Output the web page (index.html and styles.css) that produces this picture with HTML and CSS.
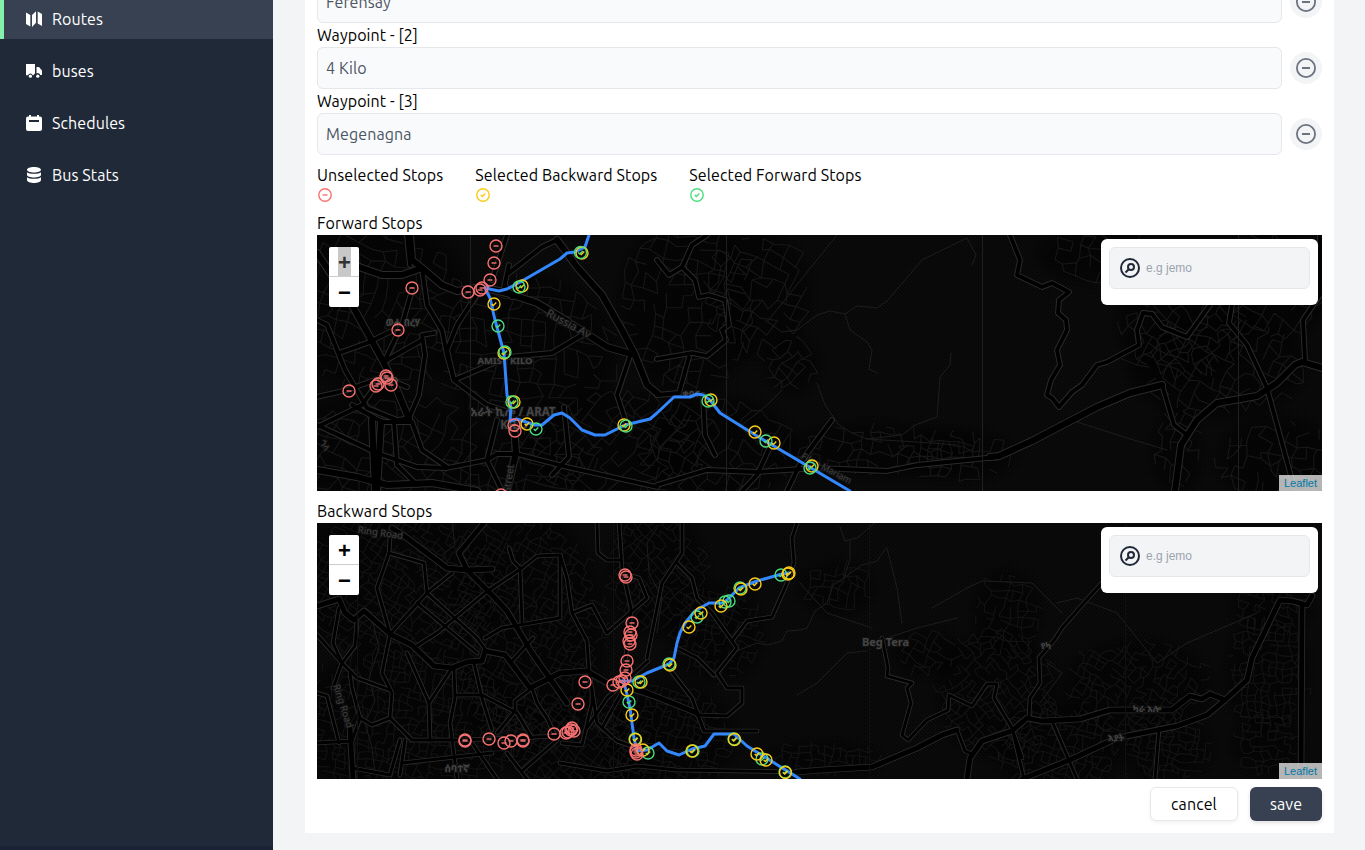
FILE: index.html
```html
<!DOCTYPE html>
<html lang="en">
<head>
<meta charset="utf-8">
<title>Routes</title>
<link rel="stylesheet" href="styles.css">
</head>
<body>
<svg class="defs" aria-hidden="true">
  <symbol id="i-minus" viewBox="0 0 24 24"><path fill="currentColor" d="M12 2a10 10 0 1 0 0 20 10 10 0 0 0 0-20zm0 18.200a8.200 8.200 0 1 1 0-16.400 8.200 8.200 0 0 1 0 16.400zM8 11h8v2H8z"/></symbol>
  <symbol id="i-find" viewBox="0 0 24 24"><g fill="none" stroke="currentColor" stroke-width="2"><circle cx="12" cy="12" r="9"/><circle cx="13" cy="11" r="3"/><path d="M10.800 13.200L7.500 16.500"/></g></symbol>
</svg>
<div class="app">
  <nav class="side">
    <a class="item active"><svg class="ic" viewBox="0 0 16 16"><path fill="currentColor" d="M0 1.500L4.300 4v11.500L0 13zM6 4l4-3.800v11.500L6 16zM11.700.5L16 3v12l-4.300-2.500z"/></svg><span>Routes</span></a>
    <a class="item"><svg class="ic" viewBox="0 0 16 16"><path fill="currentColor" d="M0 1h9v9.500a3 3 0 0 0-1.500 1.800h-.8a2.400 2.400 0 0 0-4.600 0H0zM10.500 4H13l3 3.500V12h-1.800a2.400 2.400 0 0 0-3.700-1.500z"/><circle cx="4.400" cy="13.200" r="1.600" fill="currentColor"/><circle cx="11.800" cy="13.200" r="1.600" fill="currentColor"/></svg><span>buses</span></a>
    <a class="item"><svg class="ic" viewBox="0 0 16 16"><path fill="currentColor" fill-rule="evenodd" d="M3 0h2v1.500h6V0h2v1.500h1A2 2 0 0 1 16 3.500V14a2 2 0 0 1-2 2H2a2 2 0 0 1-2-2V3.500a2 2 0 0 1 2-2h1zM3 5v2h10V5z"/></svg><span>Schedules</span></a>
    <a class="item"><svg class="ic" viewBox="0 0 16 16"><path fill="currentColor" d="M8 0c4 0 7 1.200 7 2.800S12 5.600 8 5.600 1 4.400 1 2.800 4 0 8 0zM1 5.200C3.500 7.300 12.500 7.300 15 5.200v2.600c0 3.600-14 3.600-14 0zM1 10.200c2.500 2.100 11.500 2.100 14 0V13c0 4-14 4-14 0z"/></svg><span>Bus Stats</span></a>
  </nav>
  <main class="page">
    <section class="card">
      <div class="row"><div class="field">Ferensay</div><button class="rm"><svg><use href="#i-minus"/></svg></button></div>
      <label class="lab">Waypoint - [2]</label>
      <div class="row"><div class="field">4 Kilo</div><button class="rm"><svg><use href="#i-minus"/></svg></button></div>
      <label class="lab">Waypoint - [3]</label>
      <div class="row"><div class="field">Megenagna</div><button class="rm"><svg><use href="#i-minus"/></svg></button></div>
      <div class="legend">
        <div class="key"><span>Unselected Stops</span><svg class="dot red" viewBox="-8 -8 16 16"><circle r="6.200"/><path d="M-2.500 0h5"/></svg></div>
        <div class="key"><span>Selected Backward Stops</span><svg class="dot yellow" viewBox="-8 -8 16 16"><circle r="6.200"/><path d="M-2.300 0l1.600 1.600L2.300-1.600"/></svg></div>
        <div class="key"><span>Selected Forward Stops</span><svg class="dot green" viewBox="-8 -8 16 16"><circle r="6.200"/><path d="M-2.300 0l1.600 1.600L2.300-1.600"/></svg></div>
      </div>
      <div class="lab">Forward Stops</div>
      <div class="map">
        <svg class="canvas" id="forward" viewBox="0 0 1005 256"></svg>
        <div class="zoom"><span class="plus"><b class="marked">+</b></span><span>−</span></div>
        <div class="search"><div class="box"><svg><use href="#i-find"/></svg><span>e.g jemo</span></div></div>
        <a class="credit">Leaflet</a>
      </div>
      <div class="lab second">Backward Stops</div>
      <div class="map">
        <svg class="canvas" id="backward" viewBox="0 0 1005 256"></svg>
        <div class="zoom"><span class="plus"><b>+</b></span><span>−</span></div>
        <div class="search"><div class="box"><svg><use href="#i-find"/></svg><span>e.g jemo</span></div></div>
        <a class="credit">Leaflet</a>
      </div>
      <div class="actions"><button class="btn cancel">cancel</button><button class="btn save">save</button></div>
    </section>
  </main>
</div>
<script src="map.js"></script>
</body>
</html>
```
FILE: styles.css
```css
* { box-sizing: border-box; }
body { margin: 0; height: 850px; overflow: hidden; background: #f3f4f6; font: 16px/24px "Ubuntu", "Noto Sans", sans-serif; letter-spacing: .1px; color: #000; }
.defs { position: absolute; width: 0; height: 0; }
.app { display: flex; height: 850px; }
.side { width: 273px; flex: none; background: #1f2937; border-bottom: 4px solid #1a2234; display: flex; flex-direction: column; gap: 12px; }
.item { display: flex; align-items: center; gap: 10px; height: 40px; padding-left: 26px; color: #fff; }
.item.active { height: 39px; background: #374151; border-left: 4px solid #86efac; padding-left: 22px; padding-bottom: 1px; }
.ic { width: 16px; height: 16px; flex: none; }
.page { flex: 1; padding: 0 31px 0 32px; }
.card { background: #fff; height: 833px; padding: 0 12px; overflow: hidden; }
.row { display: flex; align-items: center; gap: 8px; height: 42px; }
.row:first-child { margin-top: -19px; }
.field { flex: 1; height: 42px; border: 1px solid #e5e7eb; border-radius: 6px; background: #f9fafb; color: #4b5563; padding: 8px; }
.rm { width: 32px; height: 32px; border: 0; border-radius: 50%; background: #f3f4f6; padding: 4px; color: #6b7280; }
.rm svg { width: 24px; height: 24px; display: block; }
.lab { display: block; height: 24px; }
.legend { display: flex; gap: 32px; height: 48px; margin-top: 8px; }
.key { display: flex; flex-direction: column; }
.dot { width: 16px; height: 16px; }
.dot, .stop { fill: none; stroke-width: 1.400; }
.red { stroke: #f87171; }
.yellow { stroke: #facc15; }
.green { stroke: #4ade80; }
.map { position: relative; height: 256px; background: #080808; overflow: hidden; letter-spacing: 0; }
.canvas { display: block; width: 1005px; height: 256px; }
.second { margin-top: 8px; }
.zoom { position: absolute; left: 12px; top: 12px; width: 30px; height: 60px; background: #fff; border-radius: 2px; font: bold 22px/31px "Liberation Sans", sans-serif; text-align: center; }
.zoom span { display: block; height: 30px; padding-left: 1px; }
.zoom .plus { border-bottom: 1px solid #ccc; }
.zoom b { display: block; width: 13px; height: 29px; margin: 0 auto; }
.zoom .marked { background: #c8c8c8; color: #333; }
.search { position: absolute; right: 4px; top: 4px; width: 217px; height: 66px; padding: 8px; background: #fff; border-radius: 6px; }
.box { display: flex; align-items: center; gap: 4px; height: 42px; padding-left: 8px; border: 1px solid #e5e7eb; border-radius: 6px; background: #f3f4f6; color: #9ca3af; font: 12px/18px "Liberation Sans", sans-serif; }
.box svg { width: 24px; height: 24px; color: #1f2937; }
.credit { position: absolute; right: 0; bottom: 0; height: 16px; padding: 0 5px; background: rgba(255,255,255,.7); color: #0078a8; font: 11px/16px "Liberation Sans", sans-serif; }
.actions { display: flex; justify-content: flex-end; gap: 12px; padding-top: 8px; }
.btn { height: 34px; border-radius: 6px; font: inherit; letter-spacing: inherit; padding: 0; box-shadow: 0 2px 4px rgba(0,0,0,.12); }
.cancel { width: 88px; border: 1px solid #e5e7eb; background: #fff; box-shadow: 0 2px 4px rgba(0,0,0,.05); }
.save { width: 72px; border: 0; background: #374151; color: #fff; }
.canvas polyline { fill: none; stroke-linejoin: round; stroke-linecap: round; }
.canvas .edge { stroke: #2a2a2a; stroke-width: 5.800; }
.canvas .core { stroke: #000; stroke-width: 3.800; }
.canvas .edge.wide { stroke-width: 8; }
.canvas .core.wide { stroke-width: 6; }
#backward .edge { stroke-width: 4.600; }
#backward .core { stroke-width: 2.800; }
#backward .edge.wide { stroke-width: 6.600; }
#backward .core.wide { stroke-width: 4.800; }
.canvas .trail { stroke: #1d1d1d; stroke-width: 1; }
.canvas .route { stroke: #3388ff; stroke-width: 3; }
.streets { fill: none; stroke: #171717; stroke-width: 1.100; }
.urban { fill: #040404; fill-opacity: .45; }
.seam { stroke: #1f1f1f; }
#backward .seam { stroke: #101010; }
.place { fill: #444; stroke: #111; stroke-width: 2; paint-order: stroke; font-family: "Noto Sans", "Noto Sans Ethiopic", sans-serif; font-weight: bold; }
.way { font-weight: normal; fill: #404040; }
```
FILE: map.js
```js
const NS = 'http://www.w3.org/2000/svg';
function add(parent, tag, attrs, text) {
  const el = document.createElementNS(NS, tag);
  for (const k in attrs) el.setAttribute(k, attrs[k]);
  if (text) el.textContent = text;
  parent.appendChild(el);
  return el;
}
function random(seed) {
  return () => (seed = (seed * 16807) % 2147483647) / 2147483647;
}
// Jittered street mesh inside an ellipse: cx, cy, rx, ry, block size, rotation.
function streets(rnd, cx, cy, rx, ry, step, rot) {
  const c = Math.cos(rot), s = Math.sin(rot), n = Math.ceil(Math.max(rx, ry) / step) + 1;
  const pts = {};
  for (let i = -n; i <= n; i++) for (let j = -n; j <= n; j++) {
    const u = (i + rnd() * .7) * step, v = (j + rnd() * .7) * step;
    const x = u * c - v * s, y = u * s + v * c;
    if ((x / rx) ** 2 + (y / ry) ** 2 < .8 + rnd() * .4) pts[i + ',' + j] = (cx + x).toFixed(1) + ' ' + (cy + y).toFixed(1);
  }
  let d = '';
  for (let i = -n; i <= n; i++) for (let j = -n; j <= n; j++) {
    const p = pts[i + ',' + j];
    if (!p) continue;
    const a = pts[(i + 1) + ',' + j], b = pts[i + ',' + (j + 1)];
    if (a && rnd() < .68) d += 'M' + p + 'L' + a;
    if (b && rnd() < .68) d += 'M' + p + 'L' + b;
  }
  return d;
}
function draw(id, m) {
  const svg = document.getElementById(id), rnd = random(m.seed);
  const defs = add(svg, 'defs', {});
  const pat = add(defs, 'pattern', {id: id + 'dots', width: 4, height: 4, patternUnits: 'userSpaceOnUse'});
  add(pat, 'rect', {width: 1, height: 1, fill: '#111'});
  add(pat, 'rect', {x: 2, y: 2, width: 1, height: 1, fill: '#111'});
  const soft = add(defs, 'filter', {id: id + 'soft', x: '-20%', y: '-20%', width: '140%', height: '140%'});
  add(soft, 'feGaussianBlur', {stdDeviation: 6});
  add(svg, 'rect', {width: 1005, height: 256, fill: `url(#${id}dots)`});
  const built = add(svg, 'g', {filter: `url(#${id}soft)`});
  m.urban.forEach(u => add(built, 'ellipse', {class: 'urban', cx: u[0], cy: u[1], rx: u[2], ry: u[3]}));
  m.urban.forEach(u => add(svg, 'path', {class: 'streets', opacity: m.fade, d: streets(rnd, ...u)}));
  m.trails.forEach(p => add(svg, 'polyline', {class: 'trail', points: p}));
  for (const part of ['edge', 'core']) {
    m.roads.forEach(p => add(svg, 'polyline', {class: part, points: p}));
    m.wide.forEach(p => add(svg, 'polyline', {class: part + ' wide', points: p}));
  }
  m.seams.forEach(x => add(svg, 'line', {class: 'seam', x1: x + .5, x2: x + .5, y1: 0, y2: 256}));
  m.labels.forEach(l => add(svg, 'text', {class: 'place ' + (l[5] || ''), x: l[0], y: l[1], 'font-size': l[2], 'text-anchor': 'middle', transform: `rotate(${l[3]} ${l[0]} ${l[1]})`}, l[4]));
  m.routes.forEach(p => add(svg, 'polyline', {class: 'route', points: p}));
  for (const kind of m.order) m[kind].split(' ').forEach(p => {
    const g = add(svg, 'g', {class: 'stop ' + kind, transform: `translate(${p})`});
    add(g, 'circle', {r: 6});
    add(g, 'path', {d: kind === 'red' ? 'M-2.500 0h5' : 'M-2.300 0l1.600 1.600L2.300-1.600'});
  });
}
draw('forward', {
  seed: 71, fade: 1, order: ['yellow', 'green', 'red'], seams: [153, 409, 665, 921],
  urban: [[60,70,95,90,12,.3],[70,215,100,60,12,.5],[210,120,90,80,12,.1],[300,210,100,55,11,.7],[210,232,70,35,12,.2],[370,70,70,90,12,.2],[440,60,55,65,12,.5],[400,215,80,55,12,.6],[475,130,28,30,9,.8],[560,215,100,28,10,.1],[640,220,60,26,10,.1],[870,90,70,60,11,1],[900,130,90,55,11,.5],[960,225,60,45,11,.15],[960,50,55,55,11,.6],[860,215,25,45,10,.4],[780,20,60,28,11,.2]],
  trails: ['448,85 465,97 480,95 500,80 513,76 528,79 540,71 560,73 570,66 605,25 650,3 659,20 655,30','528,79 533,95 550,107 555,115 552,134 560,138','500,148 508,170 522,190 535,198 550,204 585,200 598,190 620,182 623,142 633,130 634,118','550,204 600,207 640,210','757,186 810,203 850,215','450,87 520,0','425,190 450,170 465,155'],
  roads: ['0,85 10,90 28,135 50,173 80,185 92,183 102,160 108,120 105,100 117,98','105,33 110,70 125,95 130,120 137,145 170,170 195,178','165,52 140,90 130,115 137,145 165,133 190,122 235,118 265,100','0,162 30,155 66,142 90,152','66,140 45,170 0,192','22,118 50,108 75,96','70,125 105,105','90,0 93,30','95,55 85,90 68,125','0,190 60,218 100,232 130,233 170,225 180,219 200,219 250,232 340,252','35,170 65,187 95,187 105,215 130,232','77,187 80,230 100,250','180,185 170,225 185,256','247,172 252,222 235,240','192,38 225,12 240,5 252,20','187,52 192,30','190,0 175,45','340,25 352,40 365,32 378,45 382,62 392,60 408,65 412,90 405,95 409,105 390,121 375,118 340,124','365,32 375,10 390,0','372,122 362,158 340,160','340,250 390,235 440,237 500,233 570,236 600,230 680,222','453,212 440,240 425,256','515,185 485,225 470,256','386,160 388,200 398,220','893,70 870,102 845,92 835,79 826,78 820,95 822,110 790,127 780,130 765,150 755,157 742,172 735,163 730,160 734,145 743,130 740,115 750,95 749,85 741,78 742,65 752,57 735,48 725,52 700,40 703,25 693,0','845,150 857,190 870,200','915,70 912,88 930,110 950,153 975,245','1003,0 1003,60 986,85 988,125','195,62 188,50','315,115 300,160 310,190'],
  wide: ['0,18 35,70 66,126 80,155 92,184','42,32 65,40 85,40 105,33 125,50 140,56 165,52 190,58 220,68 250,86 290,112 318,120 330,150 340,158','240,5 260,32 285,60 305,95 318,120','0,235 40,242 70,250 115,248 160,256','55,185 58,256','64,187 60,256','197,190 199,218 190,256','105,33 95,25 93,0','673,222 682,221 715,206 780,172 813,158 845,150','858,256 864,210 880,185 900,168 940,161 960,148 978,130 985,127 1005,133'],
  labels: [[86,91,9.5,0,'ወሐ በረሃ'],[70,149,10,0,'ፒያሳን'],[188,129,9.500,0,'AMIST KILO'],[196,181,11.500,0,'አራት ኪሎ / ARAT'],[197,194,11.500,0,'KILO'],[250,92,11,28,'Russia Av','way'],[195,244,10,-82,'Street','way'],[374,162,9,0,'ቀበና'],[508,236,9,28,'Fikre Mariam','way'],[5,212,9,60,'ጎላ','way']],
  routes: ['272,0 268,12 258,17 250,18 243,24 205,46 190,54 182,56 172,54 170,51','168,53 173,63 178,85 187,118 190,160 194,172 193,186 200,184 218,190 225,190 237,180 245,178 253,183 265,195 278,200 288,200 308,190 333,184 340,178 357,162 373,162 380,159 386,160 393,165 403,178 440,201 533,256'],
  red: '179,11 177,28 173,45 151,57 163,55 165,53 95,53 81,95 32,156 59,151 61,149 69,141 70,143 74,150 197,190 198,196 184,260',
  green: '263.500,17.500 202,52 181,91 188,117 195,167 219,194 309,191 391,166 449,206 493,233',
  yellow: '265,18 205,51 177,69 187,118 197,167 210,189 307,190 394,165 438,197 457,208 495,231'
});
draw('backward', {
  seed: 29, fade: .8, order: ['green', 'yellow', 'red'], seams: [40, 296, 552, 808],
  urban: [[80,60,110,75,7,.6],[90,200,120,75,7,.2],[210,110,80,120,7,.5],[260,220,80,50,7,.7],[350,215,70,55,7,.3],[340,50,50,65,7,.8],[400,110,48,50,7,.3],[520,65,38,28,8,.2],[610,130,35,25,8,.5],[505,236,60,18,7,.1],[680,170,60,65,7,.9],[690,90,35,45,8,.2],[740,225,65,45,7,.3],[820,165,75,50,7,.5],[950,150,42,60,7,0],[950,220,35,35,7,0],[955,85,40,28,7,.3],[850,225,45,34,7,.2]],
  trails: ['558,0 540,15 528,18 523,4','533,18 533,36 527,55','569,25 560,38 545,42 527,55 516,62 510,80 498,88 490,105 483,107 470,108 465,118 450,122 440,120 420,128 400,150','340,5 330,20 332,50 345,75 340,110','55,95 62,125 52,155 58,178 48,200 55,225 58,250','125,32 138,22 135,0','480,172 500,160 530,130 550,128','483,60 510,90 555,105','570,25 580,65 585,100','615,85 650,65 665,58 715,60 745,90','640,95 600,105 570,115','723,180 745,150 730,140','740,80 760,75 800,90 840,140 870,120 940,90'],
  roads: ['22,85 16,120 25,140 40,155 73,167','0,112 25,140 16,165','73,15 72,30 60,65 73,111 65,150 75,170 73,195 95,217 145,217 243,213','72,30 107,40 110,70 73,111','110,70 160,115 170,129','100,80 160,130','110,70 135,50','40,98 38,123 25,140','0,220 35,218 43,195 55,202 73,195','43,195 35,165 33,150','0,170 10,173 22,220','90,130 112,180 135,145','112,180 113,217','137,145 138,175 133,200 140,256','157,140 165,175 175,207','140,172 165,172 200,190 215,215','98,124 120,110 168,70 205,45 220,33 243,32 250,55 255,90 270,118 272,148','203,45 205,100','168,115 185,105 243,95 243,32','180,210 198,188 198,178 215,165 220,180 230,195 240,217','195,138 216,115','83,217 73,252 35,245','88,217 83,252','85,240 175,230','190,230 210,256','155,220 180,256','240,217 205,248','192,25 196,38 203,45','302,0 305,45 314,85 312,110 305,160','280,0 281,30 290,37 303,37','365,0 365,30 345,60 340,85 334,115 330,135','255,90 275,82 290,110 330,75 322,55 315,53','360,40 375,55 380,75 395,90 420,125 400,150 410,165 425,165 425,180 410,193 380,192','310,165 340,175 380,190 387,208 440,208','348,140 375,175 387,208','360,125 380,135 397,152','415,118 430,98 455,94 470,60 477,40 475,15 480,0','272,148 280,200 300,218 320,225','310,160 285,205','245,220 265,222 275,180 275,165','331,138 290,175 270,205','243,240 290,248 320,243 360,247 480,249','565,115 571,145 570,153 595,160 590,165 594,180 585,212 591,217 610,197 631,187 632,172 655,183 670,161 680,161 677,175 695,205 707,256','712,195 713,175 723,160 722,135 738,116 745,105 765,82 785,60','735,198 760,256','842,206 838,256','640,207 648,228 655,231','695,205 705,235'],
  wide: ['75,5 90,15 130,45 150,47 175,46','167,0 142,30 150,47 178,75 190,88 215,130 250,180','0,83 22,76 28,90 37,97 47,88 73,111 95,122 117,143 135,145 150,139 165,138 168,128 188,132 213,165 243,150 270,148 290,160 308,161 380,190','33,205 36,256','480,249 505,247 555,244 600,225 625,212 640,207','650,256 653,235 665,218 695,208 710,195 725,198 763,196 793,187 855,187 873,173 885,176 893,171 908,177 930,157 935,135 963,77 975,78 990,82 995,73','908,177 890,192 860,203 800,215 755,236 723,249 705,256','985,82 984,256'],
  labels: [[63,13,9.500,8,'Ring Road','way'],[23,184,9.500,72,'Ring Road','way'],[568.500,123,11,0,'Beg Tera'],[729,126,9,0,'የካ'],[830,189,9,0,'ካራ አሎ'],[799,218,9,0,'አያት'],[140,249,10,0,'ሰባተኛ']],
  routes: ['472,50 465,51 440,58 422,65 410,77 405,80 392,80 378,88 368,100 363,110 360,120 357,135 352,141 330,150 315,158 303,158','306,158 309,167 313,185 317,215 320,228 330,227 342,220 350,228 362,232 375,226 388,223 397,211 417,211 430,223 483,256'],
  red: '308,52 309,54 315,100 313,109 314,112 312,118 313,121 310,138 309,147 308,155 305,158 302,159 296,162 268,159 261,181 249,210 251,209 255,205 254,207 257,208 237,211 148,217 148,218 172,216 187,220 194,218 206,217 206,218 319,229 320,231 319,227',
  green: '464,52 423,65 412,78 408,79 380,94 352,141 322,159 312,179 318,216 331,230 376,228 417,216 445,236 468,249',
  yellow: '472,50 471,51 438,61 424,66 404,83 384,90 372,104 353,142 324,159 310,167 315,192 318.500,216.500 326,227 375,228 417.500,216.500 440,231 449,237 468.500,249.500'
});
```
